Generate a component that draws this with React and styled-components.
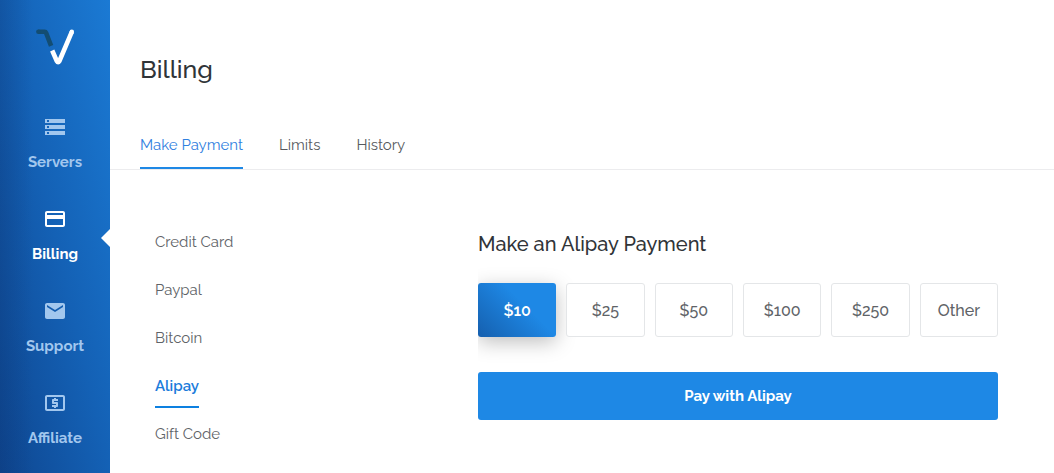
import React, { useState } from "react";
import styled, { createGlobalStyle, css } from "styled-components";
import { MdStorage, MdPayment, MdEmail, MdLocalAtm } from "react-icons/md";

const GlobalStyle = createGlobalStyle`
  *, *::before, *::after { box-sizing: border-box; }
  body {
    margin: 0;
    background: #fff;
    color: #575a5e;
    font-family: Raleway, Lato, "Open Sans", sans-serif;
    font-size: 15px;
    line-height: 24px;
  }
  button { font-family: inherit; cursor: pointer; }
  a { color: inherit; text-decoration: none; }
`;

const Shell = styled.div`
  display: flex;
  min-height: 100vh;
`;

const Sidebar = styled.aside`
  flex: 0 0 110px;
  height: 100vh;
  overflow: hidden;
  background:
    linear-gradient(90deg, rgba(12, 50, 110, 0.25), rgba(12, 50, 110, 0) 30%),
    linear-gradient(to bottom left, #1b7ad4 0%, #1461b5 50%, #0e4690 100%);
`;

const LogoLink = styled.a`
  display: flex;
  justify-content: center;
  padding: 28px 0 32px;
  svg { display: block; }
`;

const NavItem = styled.a`
  position: relative;
  display: flex;
  flex-direction: column;
  align-items: center;
  gap: 11px;
  height: 92px;
  padding-top: 15px;
  font-weight: 700;
  color: ${(p) => (p.$active ? "#fff" : "#a2c7ee")};
  svg { display: block; flex: none; }
  ${(p) =>
    p.$active &&
    css`
      &::after {
        content: "";
        position: absolute;
        right: 0;
        top: 37px;
        border: solid transparent;
        border-width: 9px 9px 9px 0;
        border-right-color: #fff;
      }
    `}
`;

const Main = styled.main`
  flex: 1;
  min-width: 0;
`;

const PageTitle = styled.h1`
  margin: 0;
  padding: 53px 30px 0;
  font-size: 25px;
  line-height: 32px;
  font-weight: 500;
  color: #303438;
`;

const Tabs = styled.nav`
  display: flex;
  gap: 36px;
  margin-top: 48px;
  padding: 0 30px;
  border-bottom: 1px solid #ececee;
`;

const Tab = styled.a`
  padding-bottom: 10px;
  border-bottom: 2px solid ${(p) => (p.$active ? "#1e88e5" : "transparent")};
  color: ${(p) => (p.$active ? "#2f80e0" : "inherit")};
`;

const Content = styled.div`
  display: grid;
  grid-template-columns: minmax(120px, 323fr) 520fr;
  padding: 60px 56px 0 45px;
`;

const Methods = styled.nav`
  display: flex;
  flex-direction: column;
  align-items: flex-start;
  gap: 14px;
`;

const Method = styled.a`
  padding-bottom: 8px;
  border-bottom: 2px solid ${(p) => (p.$active ? "#0d80e0" : "transparent")};
  font-weight: ${(p) => (p.$active ? 600 : 400)};
  color: ${(p) => (p.$active ? "#1b7cdb" : "#606367")};
`;

const Panel = styled.section`
  min-width: 0;
  overflow-x: clip;
`;

const PanelTitle = styled.h2`
  margin: 0 0 25px;
  font-size: 20px;
  line-height: 28px;
  font-weight: 500;
  color: #303438;
`;

const Amounts = styled.div`
  display: grid;
  grid-template-columns: repeat(6, 1fr);
  column-gap: 10px;
`;

const Amount = styled.button`
  height: 54px;
  padding: 0;
  border: 1px solid #e4e6e8;
  border-radius: 3px;
  background: #fff;
  color: #606367;
  font-size: 16px;
  font-weight: 500;
  ${(p) =>
    p.$active &&
    css`
      border: 0;
      background: linear-gradient(45deg, #155fae 0%, #1e88e5 60%);
      color: #fff;
      font-weight: 600;
      box-shadow: 0 5px 20px rgba(0, 0, 0, 0.26);
    `}
`;

const PayButton = styled.button`
  display: block;
  width: 100%;
  height: 48px;
  margin-top: 35px;
  border: 0;
  border-radius: 3px;
  background: #1e88e5;
  color: #fff;
  font-size: 15px;
  font-weight: 700;
`;

const NAV = [
  ["Servers", MdStorage],
  ["Billing", MdPayment],
  ["Support", MdEmail],
  ["Affiliate", MdLocalAtm],
];
const TABS = ["Make Payment", "Limits", "History"];
const METHODS = ["Credit Card", "Paypal", "Bitcoin", "Alipay", "Gift Code"];
const AMOUNTS = ["$10", "$25", "$50", "$100", "$250", "Other"];

function Logo() {
  return (
    <svg width="40" height="40" viewBox="0 0 40 40" fill="none" strokeWidth="4.6" strokeLinejoin="round">
      <path d="M3.3 3.8h6.4q1 0 1.4 1l5 13" stroke="#134d72" />
      <circle cx="3.4" cy="3.8" r="2.3" fill="#134d72" />
      <path d="M17.2 22.5l4.6 10.5q1.3 2.2 2.6 0L36.8 3.9" stroke="#fff" />
      <circle cx="36.8" cy="3.9" r="2.3" fill="#fff" />
    </svg>
  );
}

export default function App() {
  const [amount, setAmount] = useState("$10");
  return (
    <Shell>
      <GlobalStyle />
      <Sidebar>
        <LogoLink href="#" aria-label="Home">
          <Logo />
        </LogoLink>
        <nav>
          {NAV.map(([label, Icon]) => (
            <NavItem key={label} href="#" $active={label === "Billing"}>
              <Icon size={24} />
              {label}
            </NavItem>
          ))}
        </nav>
      </Sidebar>
      <Main>
        <PageTitle>Billing</PageTitle>
        <Tabs>
          {TABS.map((label) => (
            <Tab key={label} href="#" $active={label === "Make Payment"}>
              {label}
            </Tab>
          ))}
        </Tabs>
        <Content>
          <Methods>
            {METHODS.map((label) => (
              <Method key={label} href="#" $active={label === "Alipay"}>
                {label}
              </Method>
            ))}
          </Methods>
          <Panel>
            <PanelTitle>Make an Alipay Payment</PanelTitle>
            <Amounts>
              {AMOUNTS.map((value) => (
                <Amount key={value} type="button" $active={value === amount} onClick={() => setAmount(value)}>
                  {value}
                </Amount>
              ))}
            </Amounts>
            <PayButton type="button">Pay with Alipay</PayButton>
          </Panel>
        </Content>
      </Main>
    </Shell>
  );
}
